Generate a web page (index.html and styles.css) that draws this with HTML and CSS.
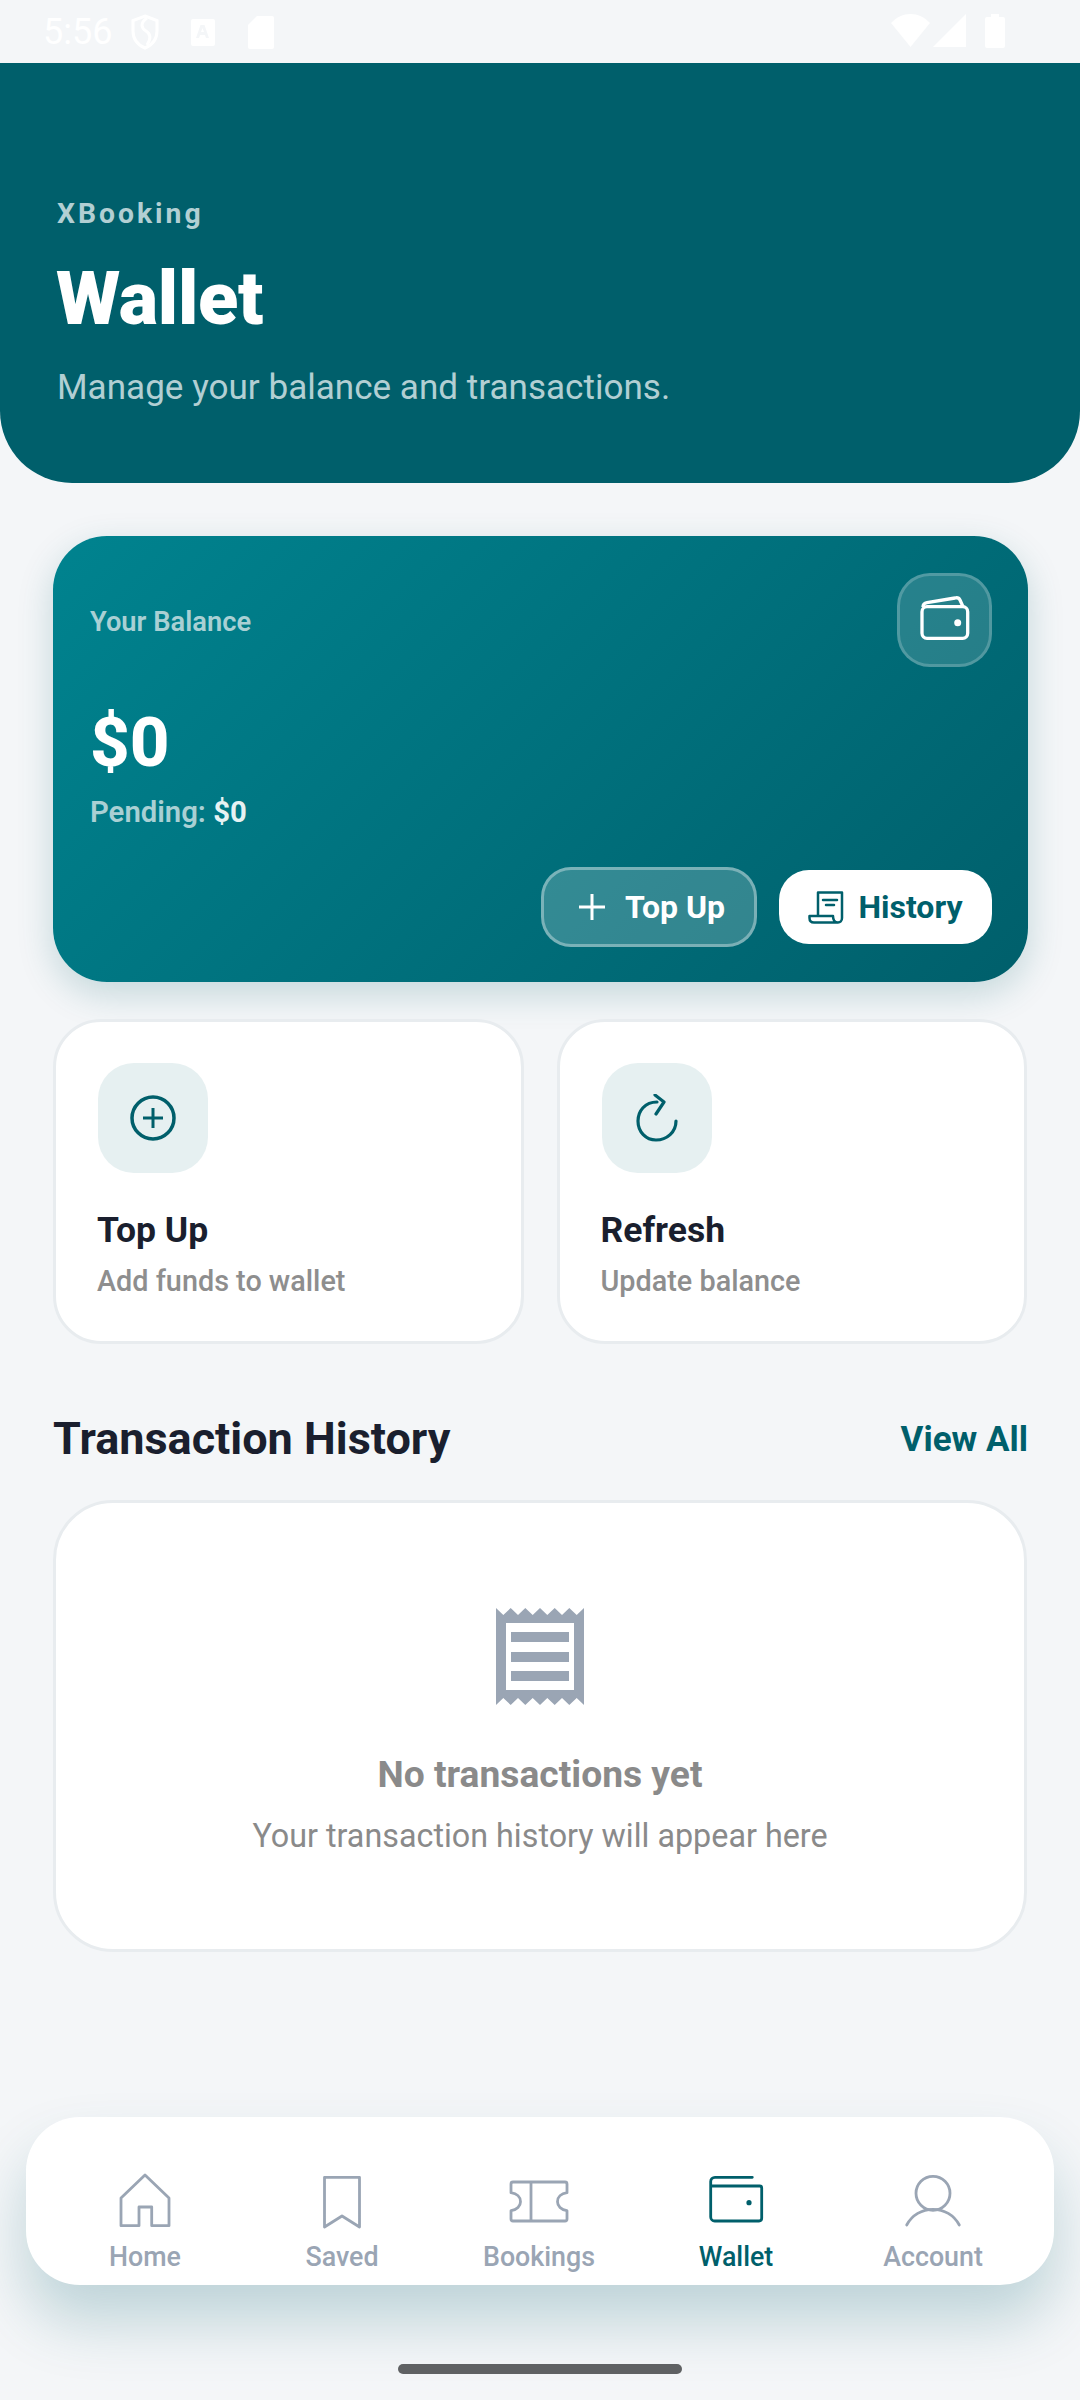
FILE: index.html
```html
<!DOCTYPE html>
<html lang="en">
<head>
	<meta charset="UTF-8">
	<link rel="stylesheet" href="styles.css">
	<title>Wallet</title>
</head>
<body>
	<div class="status-bar">
		<div class="status-left">
			<span class="status-time">5:56</span>
			<svg class="st-shield" width="28" height="36" viewBox="0 0 28 36"><path d="M14 2 L26 6.500 V17 C26 25 21 31 14 34 C7 31 2 25 2 17 V6.500 Z" fill="none" stroke="#fff" stroke-width="3"/><path d="M16 4 C9 9 10 14 15 17 C20 20 20 25 16 31" fill="none" stroke="#fff" stroke-width="3"/></svg>
			<svg class="st-a" width="24" height="27" viewBox="0 0 24 27"><path d="M2 0 H22 A2 2 0 0 1 24 2 V25 A2 2 0 0 1 22 27 H2 A2 2 0 0 1 0 25 V2 A2 2 0 0 1 2 0 Z M9.500 6 L5 19 H8 L9 16 H14 L15 19 H18 L13.500 6 Z M10 13 L11.500 9 L13 13 Z" fill="#fff" fill-rule="evenodd"/></svg>
			<svg class="st-sd" width="26" height="33" viewBox="0 0 26 33"><path d="M9 0 H24 A2 2 0 0 1 26 2 V31 A2 2 0 0 1 24 33 H2 A2 2 0 0 1 0 31 V9 Z" fill="#fff"/></svg>
		</div>
		<div class="status-right">
			<svg width="39" height="33" viewBox="0 0 39 33"><path d="M0 9 C11 -3 28 -3 39 9 L19.500 33 Z" fill="#fff"/></svg>
			<svg width="33" height="33" viewBox="0 0 33 33"><path d="M33 0 V33 H0 Z" fill="#fff"/></svg>
			<svg class="st-batt" width="20" height="34" viewBox="0 0 20 34"><path d="M6 0 H14 V3 H18 A2 2 0 0 1 20 5 V32 A2 2 0 0 1 18 34 H2 A2 2 0 0 1 0 32 V5 A2 2 0 0 1 2 3 H6 Z" fill="#fff"/></svg>
		</div>
	</div>

	<div class="header">
		<div class="header-brand">XBooking</div>
		<h1 class="header-title">Wallet</h1>
		<div class="header-sub">Manage your balance and transactions.</div>
	</div>

	<div class="content">
		<div class="balance-card">
			<div class="balance-top">
				<span class="balance-label">Your Balance</span>
				<div class="balance-icon">
					<svg width="52" height="50" viewBox="0 0 52 50" fill="none" stroke="#fff" stroke-width="3.300" stroke-linejoin="round"><rect x="3" y="11.700" width="45.700" height="31.600" rx="5"/><path d="M4 12 C4 9 6 8 8 7.700 L36 3 C38 2.500 40 3 41 5 L44 11.700"/><circle cx="38.700" cy="27.700" r="3.500" fill="#fff" stroke="none"/></svg>
				</div>
			</div>
			<div class="balance-amount">$0</div>
			<div class="balance-pending">Pending: <b>$0</b></div>
			<div class="balance-actions">
				<div class="btn btn-topup">
					<svg width="26" height="26" viewBox="0 0 26 26" stroke="#fff" stroke-width="3"><path d="M13 0 V26 M0 13 H26"/></svg>
					<span>Top Up</span>
				</div>
				<div class="btn btn-history">
					<svg width="36" height="33" viewBox="0 0 36 33" fill="none" stroke="#005f6b" stroke-width="2.500" stroke-linejoin="round" stroke-linecap="round"><path d="M10 24 V1.500 H34 V27 C34 30 32 31.500 30 31.500 C27 31.500 25 30 25 25 H1.500 V27 C1.500 30 3 31.500 6 31.500 H30"/><path d="M15 9 H29 M18 14 H26"/></svg>
					<span>History</span>
				</div>
			</div>
		</div>

		<div class="quick-row">
			<div class="quick-card">
				<div class="quick-icon">
					<svg width="46" height="46" viewBox="0 0 46 46" fill="none" stroke="#005f6b" stroke-width="3.500"><circle cx="23" cy="23" r="21"/><path d="M23 13 V33 M13 23 H33" stroke-width="3"/></svg>
				</div>
				<div class="quick-title">Top Up</div>
				<div class="quick-sub">Add funds to wallet</div>
			</div>
			<div class="quick-card">
				<div class="quick-icon">
					<svg width="42" height="48" viewBox="0 0 42 48" fill="none" stroke="#005f6b" stroke-width="3.200" stroke-linecap="round" stroke-linejoin="round"><path d="M21 8 C9 8 2 17 2 27 C2 38 10 46 20 46 C31 46 40 38 40 27"/><path d="M19 1 L28 8 L20 20"/></svg>
				</div>
				<div class="quick-title">Refresh</div>
				<div class="quick-sub">Update balance</div>
			</div>
		</div>

		<div class="section-head">
			<h2 class="section-title">Transaction History</h2>
			<span class="section-link">View All</span>
		</div>

		<div class="empty-card">
			<svg class="empty-icon" width="88" height="97" viewBox="0 0 88 97"><path d="M0 0 L7.300 7 L14.700 0 L22 7 L29.300 0 L36.700 7 L44 0 L51.300 7 L58.700 0 L66 7 L73.300 0 L80.700 7 L88 0 V97 L80.700 90 L73.300 97 L66 90 L58.700 97 L51.300 90 L44 97 L36.700 90 L29.300 97 L22 90 L14.700 97 L7.300 90 L0 97 Z M10 15 V82 H78 V15 Z" fill="#9aa5b4" fill-rule="evenodd"/><rect x="15" y="24" width="58" height="10" fill="#9aa5b4"/><rect x="15" y="44" width="58" height="10" fill="#9aa5b4"/><rect x="15" y="63" width="58" height="10" fill="#9aa5b4"/></svg>
			<div class="empty-title">No transactions yet</div>
			<div class="empty-sub">Your transaction history will appear here</div>
		</div>
	</div>

	<div class="bottom-nav">
		<div class="nav-item">
			<svg width="60" height="60" viewBox="0 0 60 60" fill="none" stroke="#9aa5b4" stroke-width="2.800" stroke-linejoin="round"><path d="M30 5 L6 28 V55.700 H24 V37 H36.700 V55.700 H54 V28 Z"/></svg>
			<span>Home</span>
		</div>
		<div class="nav-item">
			<svg width="60" height="60" viewBox="0 0 60 60" fill="none" stroke="#9aa5b4" stroke-width="2.800" stroke-linejoin="round"><path d="M12.500 7.300 H47.500 V57 L30 46 L12.500 57 Z"/></svg>
			<span>Saved</span>
		</div>
		<div class="nav-item">
			<svg width="60" height="60" viewBox="0 0 60 60" fill="none" stroke="#9aa5b4" stroke-width="2.800" stroke-linejoin="round"><path d="M4 12 H56 A2 2 0 0 1 58 14 V22.700 C52 23.500 48.500 27 48.500 31.700 C48.500 36 52 40 58 40.700 V49 A2 2 0 0 1 56 51 H4 A2 2 0 0 1 2 49 V40.700 C8 40 11.500 36 11.500 31.700 C11.500 27 8 23.500 2 22.700 V14 A2 2 0 0 1 4 12 Z"/><path d="M22 12 V51"/></svg>
			<span>Bookings</span>
		</div>
		<div class="nav-item nav-active">
			<svg width="60" height="60" viewBox="0 0 60 60" fill="none" stroke="#005f6b" stroke-width="2.800" stroke-linejoin="round" stroke-linecap="round"><path d="M46.300 7.300 H9 A4.300 4.300 0 0 0 4.700 11.600 V47 A4 4 0 0 0 8.700 51 H53 A2.700 2.700 0 0 0 55.700 48.300 V18 A2 2 0 0 0 53.700 16 H4.700"/><circle cx="43" cy="32.700" r="2.600" fill="#005f6b" stroke="none"/></svg>
			<span>Wallet</span>
		</div>
		<div class="nav-item">
			<svg width="60" height="60" viewBox="0 0 60 60" fill="none" stroke="#9aa5b4" stroke-width="2.800" stroke-linecap="round"><circle cx="30" cy="23.300" r="17"/><path d="M3.700 55 C9 45 19 39.300 30 39.300 C41 39.300 51 45 56.300 55"/></svg>
			<span>Account</span>
		</div>
	</div>

	<div class="home-bar"></div>
</body>
</html>
```

FILE: styles.css
```css
* {
	box-sizing: border-box;
}
html, body {
	margin: 0;
	padding: 0;
}
body {
	position: relative;
	width: 1080px;
	height: 2400px;
	overflow: hidden;
	background: #f4f6f8;
	font-family: Roboto, "Noto Sans", sans-serif;
}

/* status bar */
.status-bar {
	height: 63px;
	display: flex;
	justify-content: space-between;
	align-items: flex-start;
	padding: 14px 75px 0 43px;
}
.status-left {
	display: flex;
	align-items: center;
	gap: 19px;
}
.status-right {
	display: flex;
	align-items: flex-start;
	gap: 3px;
}
.status-time {
	font-size: 36px;
	line-height: 36px;
	color: #fff;
}
.st-a {
	margin-left: 13px;
}
.st-sd {
	margin-left: 14px;
}
.st-batt {
	margin-left: 16px;
}

/* header */
.header {
	height: 420px;
	padding: 136px 57px 0;
	background: #005f6b;
	border-radius: 0 0 72px 72px;
}
.header-brand {
	font-size: 28.300px;
	line-height: 30px;
	font-weight: 700;
	letter-spacing: 3px;
	color: #b2cfd3;
}
.header-title {
	margin: 28px 0 0 -1px;
	font-size: 74px;
	line-height: 84px;
	font-weight: 900;
	letter-spacing: -0.300px;
	color: #fff;
}
.header-sub {
	margin-top: 26px;
	font-size: 35.100px;
	line-height: 40px;
	color: #b2cfd3;
}

/* content */
.content {
	padding: 53px 52px 0 53px;
}

.balance-card {
	height: 446px;
	padding: 37px 36px 35px;
	border-radius: 54px;
	background: linear-gradient(135deg, #00838f 0%, #005f6b 100%);
	box-shadow: 0 12px 36px rgba(0, 95, 107, 0.2);
}
.balance-top {
	display: flex;
	justify-content: space-between;
	align-items: center;
	padding-left: 1px;
}
.balance-label {
	margin-top: 4px;
	font-size: 27.300px;
	line-height: 30px;
	font-weight: 600;
	color: #a9d0d4;
}
.balance-icon {
	width: 95px;
	height: 94px;
	display: flex;
	align-items: center;
	justify-content: center;
	border-radius: 33px;
	background: rgba(255, 255, 255, 0.15);
	border: 3px solid rgba(255, 255, 255, 0.2);
}
.balance-amount {
	margin-top: 36px;
	padding-left: 1px;
	font-size: 69px;
	line-height: 80px;
	font-weight: 800;
	color: #fff;
}
.balance-pending {
	margin-top: 11px;
	padding-left: 1px;
	font-size: 29.300px;
	line-height: 36px;
	font-weight: 600;
	color: #a9d0d4;
}
.balance-pending b {
	font-weight: 700;
	color: #e6f2f3;
}
.balance-actions {
	margin-top: 37px;
	display: flex;
	justify-content: flex-end;
	align-items: center;
	gap: 22px;
}
.btn {
	display: flex;
	align-items: center;
	justify-content: center;
	font-size: 32px;
	font-weight: 700;
}
.btn-topup {
	width: 216px;
	height: 80px;
	padding-left: 6px;
	gap: 20px;
	border-radius: 30px;
	color: #fff;
	background: rgba(255, 255, 255, 0.2);
	border: 3px solid rgba(255, 255, 255, 0.35);
}
.btn-history {
	width: 213px;
	height: 74px;
	gap: 14px;
	border-radius: 30px;
	color: #005f6b;
	background: #fff;
}

/* quick actions */
.quick-row {
	margin: 37px 1px 0 0;
	display: grid;
	grid-template-columns: 1fr 1fr;
	gap: 33px;
}
.quick-card {
	height: 325px;
	padding: 41px 41px 0;
	background: #fff;
	border: 3px solid #e8ecef;
	border-radius: 48px;
}
.quick-icon {
	width: 110px;
	height: 110px;
	margin-left: 1px;
	display: flex;
	align-items: center;
	justify-content: center;
	border-radius: 36px;
	background: #e6f0f1;
}
.quick-title {
	margin-top: 35px;
	font-size: 35.500px;
	line-height: 44px;
	font-weight: 700;
	color: #1a1f2e;
}
.quick-sub {
	margin-top: 11px;
	font-size: 28.800px;
	line-height: 36px;
	font-weight: 500;
	color: #8e8e8e;
}

/* history */
.section-head {
	margin-top: 67px;
	display: flex;
	justify-content: space-between;
	align-items: center;
}
.section-title {
	margin: 0;
	font-size: 45px;
	line-height: 56px;
	font-weight: 700;
	color: #1a1f2e;
}
.section-link {
	font-size: 35px;
	font-weight: 700;
	color: #005f6b;
}
.empty-card {
	margin: 33px 1px 0 0;
	height: 452px;
	padding-top: 105px;
	display: flex;
	flex-direction: column;
	align-items: center;
	background: #fff;
	border: 3px solid #e8ecef;
	border-radius: 60px;
}
.empty-icon {
	display: block;
}
.empty-title {
	margin-top: 46px;
	font-size: 37.200px;
	line-height: 46px;
	font-weight: 700;
	color: #8a8a8a;
}
.empty-sub {
	margin-top: 19px;
	font-size: 32.300px;
	line-height: 40px;
	color: #8a8a8a;
}

/* bottom nav sits over the page */
.bottom-nav {
	position: absolute;
	left: 26px;
	top: 2117px;
	width: 1028px;
	height: 168px;
	padding: 53px 22.500px 0 20.500px;
	display: grid;
	grid-template-columns: repeat(5, 1fr);
	background: #fff;
	border-radius: 54px;
	box-shadow: 0 36px 60px rgba(0, 95, 107, 0.225);
}
.nav-item {
	display: flex;
	flex-direction: column;
	align-items: center;
	font-size: 26.800px;
	line-height: 32px;
	font-weight: 500;
	color: #9aa5b4;
}
.nav-item svg {
	display: block;
	margin-bottom: 11px;
}
.nav-active {
	color: #005f6b;
}
.home-bar {
	position: absolute;
	left: 398px;
	top: 2364px;
	width: 284px;
	height: 10px;
	border-radius: 5px;
	background: #5f6163;
}
```
